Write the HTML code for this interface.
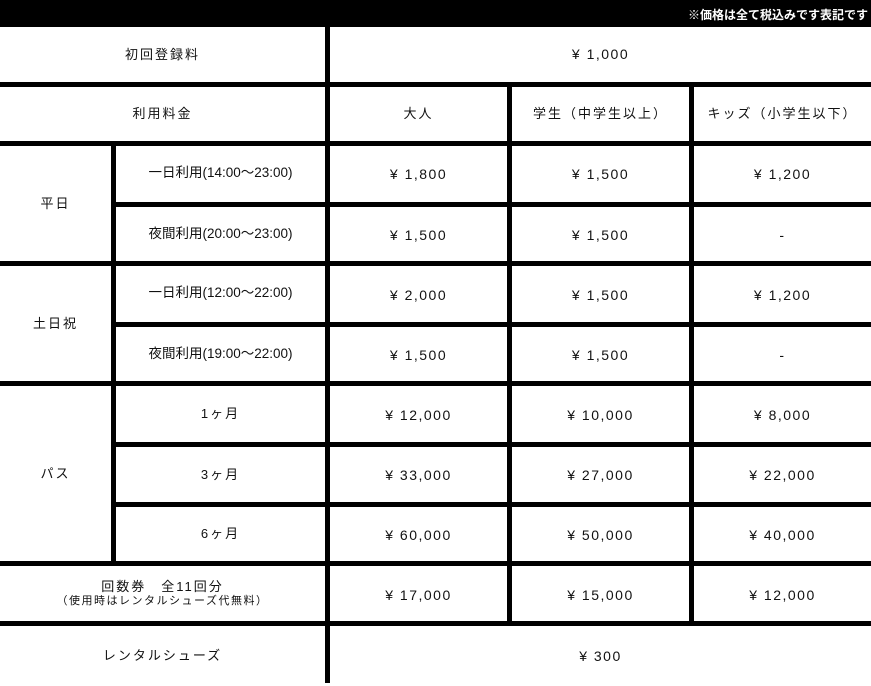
<!DOCTYPE html>
<html><head><meta charset="utf-8"><style>
body{margin:0;width:871px;height:683px;background:#fff;position:relative;overflow:hidden;font-family:"Liberation Sans","Noto Sans CJK JP",sans-serif;color:#111}
.b{position:absolute;background:#000}
.t{position:absolute;display:flex;align-items:center;justify-content:center;text-align:center;font-size:13px;letter-spacing:2px;line-height:1.2}
.n{letter-spacing:1.5px;font-size:14px}
.c{letter-spacing:0;font-size:13.5px}
</style></head><body>
<div class="b" style="left:0;top:0;width:871px;height:27px"></div>
<div style="position:absolute;right:3px;top:6px;color:#fff;font-size:12px;font-weight:bold;letter-spacing:0">※価格は全て税込みです表記です</div>

<!-- horizontal lines -->
<div class="b" style="left:0;top:82px;width:871px;height:5px"></div>
<div class="b" style="left:0;top:141px;width:871px;height:5px"></div>
<div class="b" style="left:111px;top:202px;width:760px;height:5px"></div>
<div class="b" style="left:0;top:261px;width:871px;height:5px"></div>
<div class="b" style="left:111px;top:322px;width:760px;height:5px"></div>
<div class="b" style="left:0;top:381px;width:871px;height:5px"></div>
<div class="b" style="left:111px;top:442px;width:760px;height:5px"></div>
<div class="b" style="left:111px;top:502px;width:760px;height:5px"></div>
<div class="b" style="left:0;top:561px;width:871px;height:5px"></div>
<div class="b" style="left:0;top:621px;width:871px;height:5px"></div>
<!-- vertical lines -->
<div class="b" style="left:325px;top:27px;width:5px;height:656px"></div>
<div class="b" style="left:111px;top:146px;width:5px;height:416px"></div>
<div class="b" style="left:507px;top:87px;width:5px;height:535px"></div>
<div class="b" style="left:689px;top:87px;width:5px;height:535px"></div>

<div class="t" style="left:0;top:27px;width:325px;height:55px">初回登録料</div>
<div class="t n" style="left:330px;top:27px;width:541px;height:55px">¥ 1,000</div>

<div class="t" style="left:0;top:87px;width:325px;height:54px">利用料金</div>
<div class="t" style="left:330px;top:87px;width:177px;height:54px">大人</div>
<div class="t" style="left:512px;top:87px;width:177px;height:54px">学生（中学生以上）</div>
<div class="t" style="left:694px;top:87px;width:177px;height:54px">キッズ（小学生以下）</div>

<div class="t" style="left:0;top:146px;width:111px;height:115px">平日</div>
<div class="t" style="left:0;top:266px;width:111px;height:115px">土日祝</div>
<div class="t" style="left:0;top:386px;width:111px;height:175px">パス</div>

<div class="t c" style="left:116px;top:146px;width:209px;height:54px">一日利用(14:00〜23:00)</div>
<div class="t c" style="left:116px;top:207px;width:209px;height:54px">夜間利用(20:00〜23:00)</div>
<div class="t c" style="left:116px;top:266px;width:209px;height:54px">一日利用(12:00〜22:00)</div>
<div class="t c" style="left:116px;top:327px;width:209px;height:54px">夜間利用(19:00〜22:00)</div>
<div class="t" style="left:116px;top:386px;width:209px;height:56px">1ヶ月</div>
<div class="t" style="left:116px;top:447px;width:209px;height:55px">3ヶ月</div>
<div class="t" style="left:116px;top:507px;width:209px;height:54px">6ヶ月</div>

<div class="t n" style="left:330px;top:146px;width:177px;height:56px">¥ 1,800</div>
<div class="t n" style="left:512px;top:146px;width:177px;height:56px">¥ 1,500</div>
<div class="t n" style="left:694px;top:146px;width:177px;height:56px">¥ 1,200</div>
<div class="t n" style="left:330px;top:207px;width:177px;height:56px">¥ 1,500</div>
<div class="t n" style="left:512px;top:207px;width:177px;height:56px">¥ 1,500</div>
<div class="t n" style="left:694px;top:207px;width:177px;height:56px">-</div>
<div class="t n" style="left:330px;top:266px;width:177px;height:58px">¥ 2,000</div>
<div class="t n" style="left:512px;top:266px;width:177px;height:58px">¥ 1,500</div>
<div class="t n" style="left:694px;top:266px;width:177px;height:58px">¥ 1,200</div>
<div class="t n" style="left:330px;top:327px;width:177px;height:56px">¥ 1,500</div>
<div class="t n" style="left:512px;top:327px;width:177px;height:56px">¥ 1,500</div>
<div class="t n" style="left:694px;top:327px;width:177px;height:56px">-</div>
<div class="t n" style="left:330px;top:386px;width:177px;height:58px">¥ 12,000</div>
<div class="t n" style="left:512px;top:386px;width:177px;height:58px">¥ 10,000</div>
<div class="t n" style="left:694px;top:386px;width:177px;height:58px">¥ 8,000</div>
<div class="t n" style="left:330px;top:447px;width:177px;height:56px">¥ 33,000</div>
<div class="t n" style="left:512px;top:447px;width:177px;height:56px">¥ 27,000</div>
<div class="t n" style="left:694px;top:447px;width:177px;height:56px">¥ 22,000</div>
<div class="t n" style="left:330px;top:507px;width:177px;height:56px">¥ 60,000</div>
<div class="t n" style="left:512px;top:507px;width:177px;height:56px">¥ 50,000</div>
<div class="t n" style="left:694px;top:507px;width:177px;height:56px">¥ 40,000</div>

<div class="t" style="left:0;top:566px;width:325px;height:55px;flex-direction:column"><div style="font-size:13px">回数券　全11回分</div><div style="font-size:11px;letter-spacing:1.5px">（使用時はレンタルシューズ代無料）</div></div>
<div class="t n" style="left:330px;top:566px;width:177px;height:58px">¥ 17,000</div>
<div class="t n" style="left:512px;top:566px;width:177px;height:58px">¥ 15,000</div>
<div class="t n" style="left:694px;top:566px;width:177px;height:58px">¥ 12,000</div>

<div class="t" style="left:0;top:626px;width:325px;height:60px">レンタルシューズ</div>
<div class="t n" style="left:330px;top:626px;width:541px;height:60px">¥ 300</div>
</body></html>
